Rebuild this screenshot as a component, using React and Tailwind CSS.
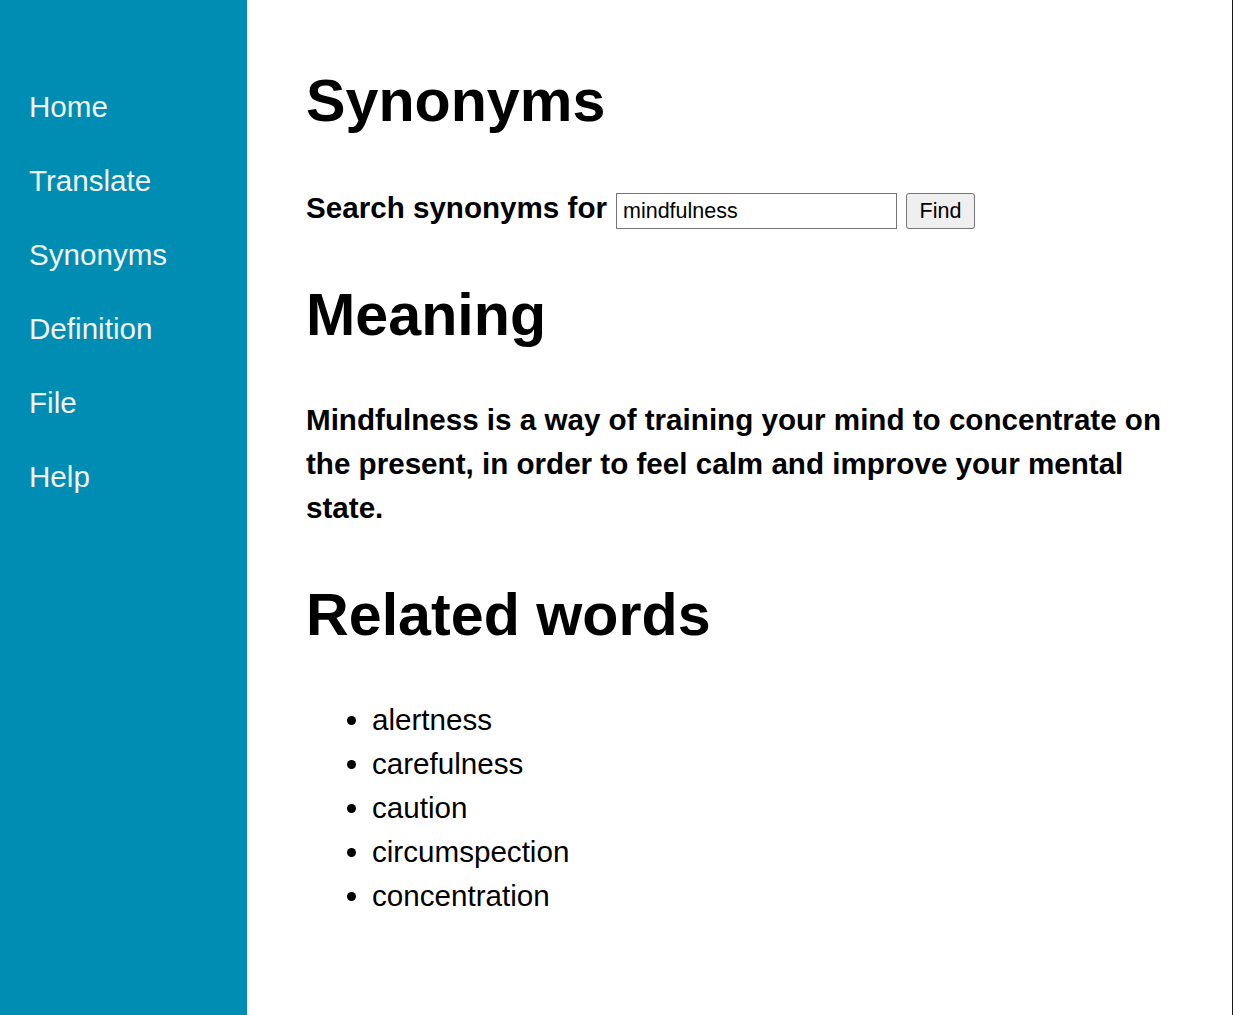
const navItems = ['Home', 'Translate', 'Synonyms', 'Definition', 'File', 'Help'];
const related = ['alertness', 'carefulness', 'caution', 'circumspection', 'concentration'];

const App = () => {
    return (
        <div className="flex h-[1015px] w-[1233px] overflow-hidden bg-white font-['Liberation_Sans',Arial,sans-serif] text-black">
            {/* Sidebar */}
            <nav className="w-[247px] shrink-0 bg-[#008db3] pt-[70px]">
                {navItems.map((item) => (
                    <a
                        key={item}
                        href="#"
                        className="block h-[74px] pl-[29px] text-[29.6px] leading-[74px] text-[#f2f2f2]"
                    >
                        {item}
                    </a>
                ))}
            </nav>

            {/* Main */}
            <main className="flex-1 border-r border-[#1a1a1a] pl-[59px] pr-[40px] pt-[67px]">
                <h1 className="text-[59.2px] font-bold leading-[68px]">Synonyms</h1>

                <div className="mt-[58px] flex items-start">
                    <span className="text-[29.6px] font-bold leading-[30px]">Search synonyms for</span>
                    <input
                        type="text"
                        defaultValue="mindfulness"
                        className="ml-[9px] h-[36px] w-[281px] border border-[#767676] bg-white px-[6px] text-[21.5px] outline-none"
                    />
                    <button className="ml-[9px] h-[36px] w-[69px] rounded-[3px] border border-[#767676] bg-[#efefef] text-[21.5px]">
                        Find
                    </button>
                </div>

                <h2 className="mt-[52px] text-[59.2px] font-bold leading-[68px]">Meaning</h2>
                <p className="mt-[49px] text-[29.6px] font-bold leading-[44px]">
                    Mindfulness is a way of training your mind to concentrate on the present, in order to feel calm and improve your mental state.
                </p>

                <h2 className="mt-[51px] text-[59.2px] font-bold leading-[68px]">Related words</h2>
                <ul className="mt-[49px] list-disc pl-[66px] text-[29.6px] leading-[44px]">
                    {related.map((word) => (
                        <li key={word}>{word}</li>
                    ))}
                </ul>
            </main>
        </div>
    );
};

export default App;
